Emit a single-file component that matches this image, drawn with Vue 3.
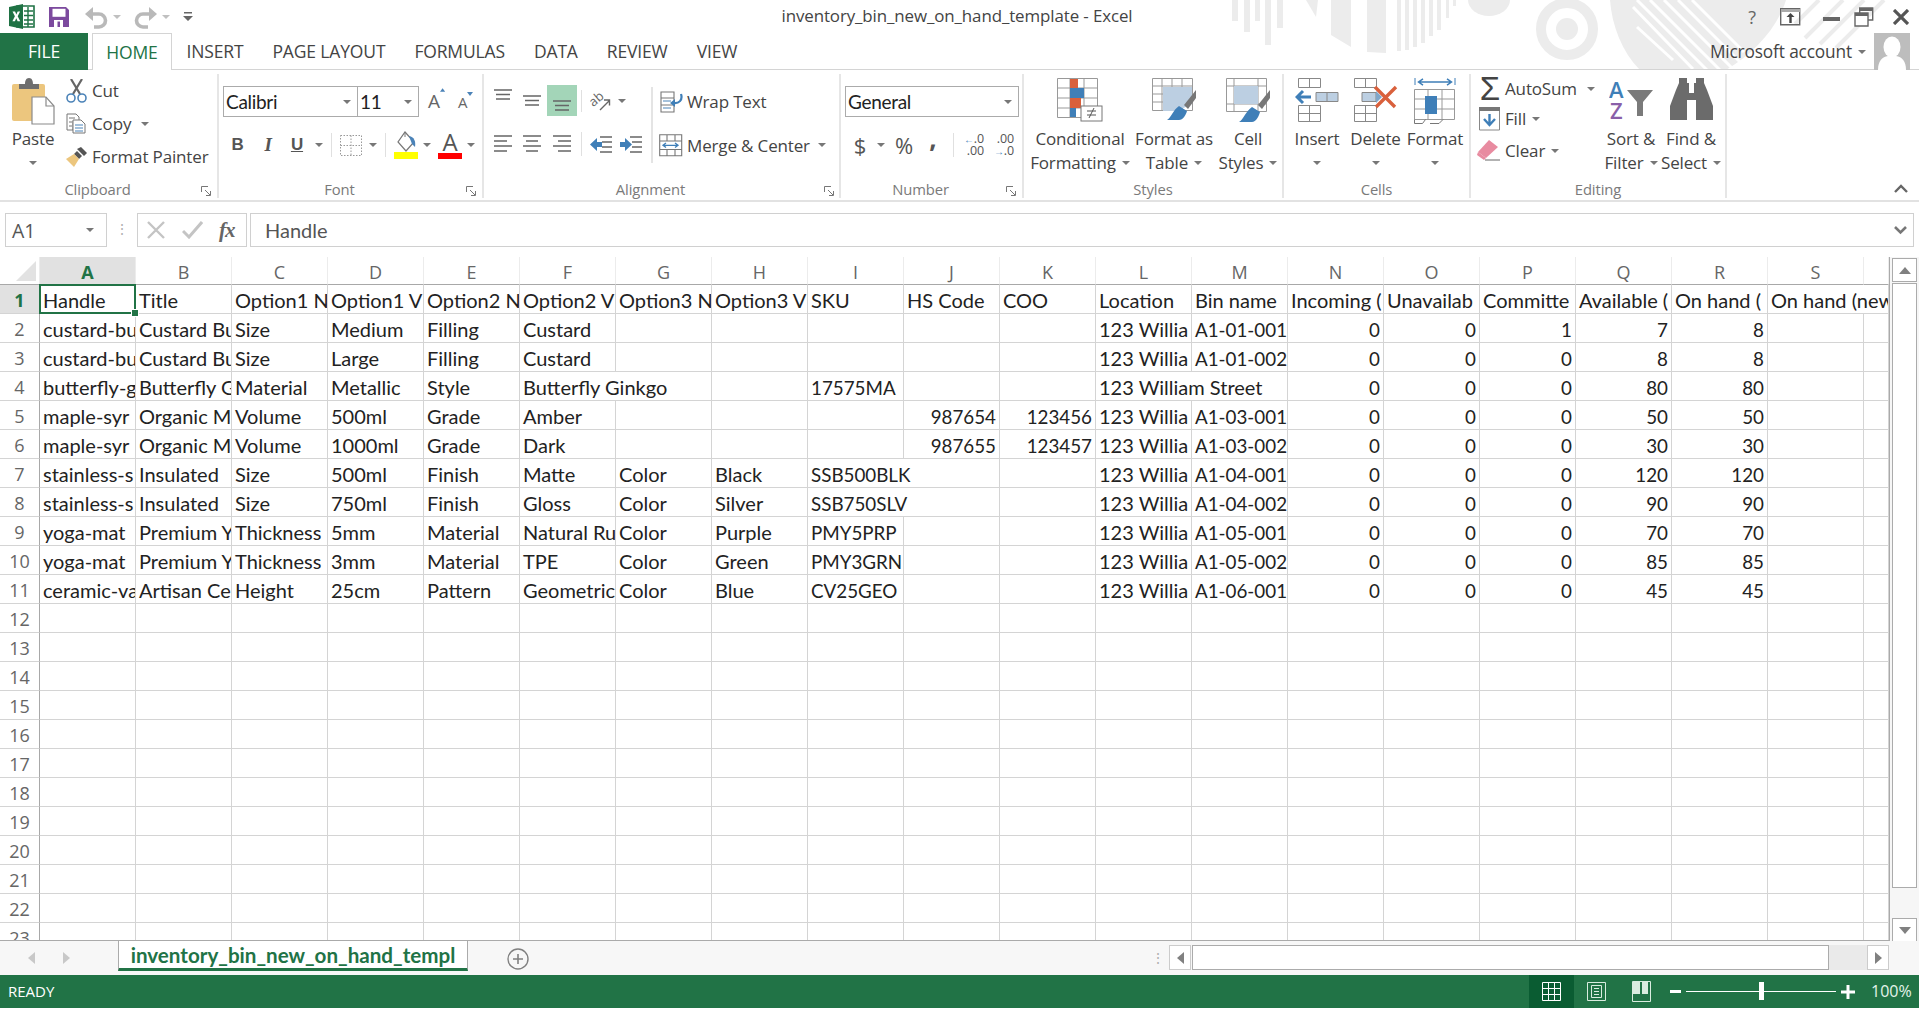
<script setup>
const tabs = ['INSERT', 'PAGE LAYOUT', 'FORMULAS', 'DATA', 'REVIEW', 'VIEW']
const cols = 'ABCDEFGHIJKLMNOPQRS'.split('').concat([''])
const loc = '123 Willia'
const codeCols = [8, 9, 10, 12]
const raw = [
  ['Handle','Title','Option1 N','Option1 V','Option2 N','Option2 V','Option3 N','Option3 V','SKU','HS Code','COO','Location','Bin name','Incoming (','Unavailab','Committe','Available (','On hand (','On hand (new',''],
  ['custard-bu','Custard Bu','Size','Medium','Filling','Custard','','','','','',loc,'A1-01-001',0,0,1,7,8,'',''],
  ['custard-bu','Custard Bu','Size','Large','Filling','Custard','','','','','',loc,'A1-01-002',0,0,0,8,8,'',''],
  ['butterfly-g','Butterfly G','Material','Metallic','Style','Butterfly Ginkgo','','','17575MA','','','123 William Street','',0,0,0,80,80,'',''],
  ['maple-syr','Organic M','Volume','500ml','Grade','Amber','','','',987654,123456,loc,'A1-03-001',0,0,0,50,50,'',''],
  ['maple-syr','Organic M','Volume','1000ml','Grade','Dark','','','',987655,123457,loc,'A1-03-002',0,0,0,30,30,'',''],
  ['stainless-s','Insulated','Size','500ml','Finish','Matte','Color','Black','SSB500BLK','','',loc,'A1-04-001',0,0,0,120,120,'',''],
  ['stainless-s','Insulated','Size','750ml','Finish','Gloss','Color','Silver','SSB750SLV','','',loc,'A1-04-002',0,0,0,90,90,'',''],
  ['yoga-mat','Premium Y','Thickness','5mm','Material','Natural Ru','Color','Purple','PMY5PRP','','',loc,'A1-05-001',0,0,0,70,70,'',''],
  ['yoga-mat','Premium Y','Thickness','3mm','Material','TPE','Color','Green','PMY3GRN','','',loc,'A1-05-002',0,0,0,85,85,'',''],
  ['ceramic-va','Artisan Ce','Height','25cm','Pattern','Geometric','Color','Blue','CV25GEO','','',loc,'A1-06-001',0,0,0,45,45,'',''],
]
const rows = []
for (let r = 0; r < 23; r++) {
  const src = raw[r] || new Array(20).fill('')
  const cells = []
  for (let c = 0; c < 20; c++) {
    const v = src[c]
    const s = String(v)
    const limit = c === 8 ? 8 : 11
    const spill = s.length > limit && c < 19 && src[c + 1] === ''
    const num = typeof v === 'number'
    cells.push({ key: c, text: s, num, code: r > 0 && (num || codeCols.includes(c)), span: spill ? 2 : 1 })
    if (spill) c++
  }
  rows.push({ n: r + 1, cells })
}
</script>

<template>
  <div class="app">
    <div class="chrome">
      <svg class="pattern" width="700" height="70" viewBox="1220 0 700 70">
        <g fill="#ececec">
          <rect x="1232" y="0" width="6" height="21"/><rect x="1244" y="0" width="6" height="32"/><rect x="1255" y="0" width="5" height="21"/><rect x="1265" y="0" width="6" height="45"/><rect x="1277" y="0" width="6" height="28"/>
          <path d="M1306 0h12l-2 17z"/><path d="M1331 0h20v47l-20-12z"/><path d="M1367 0h19v53l-19-1z"/>
          <rect x="1397" y="0" width="4" height="51"/><rect x="1405" y="0" width="4" height="50"/><rect x="1413" y="0" width="4" height="47"/><rect x="1421" y="0" width="4" height="43"/><rect x="1429" y="0" width="4" height="36"/><rect x="1437" y="0" width="4" height="30"/><rect x="1446" y="0" width="3" height="18"/><rect x="1453" y="0" width="3" height="6"/>
          <path d="M1468 0a21 16 0 0 0 42 0z"/>
          <circle cx="1567" cy="29" r="11"/>
          <path d="M1610 0c2 26 12 52 30 70h86c30-18 52-44 60-70z"/>
        </g>
        <circle cx="1567" cy="29" r="26" fill="none" stroke="#ececec" stroke-width="10"/>
        <g stroke="#fff" stroke-width="3" fill="none">
          <path d="M1633 7l60 62M1637 27l36 33M1637 0l70 70M1650 0l70 70M1664 0l70 70M1678 0l62 62M1692 0l52 52"/>
        </g>
        <g stroke="#ececec" stroke-width="4" fill="none">
          <path d="M1795 24l24-24M1805 38l38-38M1820 44l44-44M1836 48l48-48"/>
        </g>
      </svg>
      <div class="titlebar">
        <div class="qat">
          <svg class="i-excel" width="26" height="25" viewBox="0 0 26 25">
            <path d="M8 2h17v21H8z" fill="#fff" stroke="#1f7244" stroke-width="1.6"/>
            <path d="M15 7h9M15 11.5h9M15 16h9M15 20h9M19 3v20" stroke="#1f7244" stroke-width="1.4"/>
            <path d="M0 3l14-3v25L0 22z" fill="#1f7244"/>
            <path d="M3.5 7.5h2.6l1.2 3 1.4-3h2.4l-2.4 4.7 2.5 5h-2.6l-1.3-3-1.4 3H3.4l2.5-5z" fill="#fff"/>
          </svg>
          <svg class="i-save" width="20" height="20" viewBox="0 0 20 20">
            <path d="M0 0h17l3 3v17H0z" fill="#7c4a9e"/>
            <rect x="3.5" y="1.8" width="13" height="8" fill="#fff"/>
            <rect x="5" y="13" width="9" height="7" fill="#fff"/><rect x="8.5" y="14.5" width="2.5" height="5.5" fill="#7c4a9e"/>
          </svg>
          <svg class="i-undo" width="23" height="24" viewBox="0 0 23 24">
            <path d="M5 9h9a6.500 6.500 0 0 1 0 13H9" fill="none" stroke="#b9b9b9" stroke-width="3.6"/>
            <path d="M0 9l8-7v14z" fill="#b9b9b9"/>
          </svg>
          <i class="caret c-undo light"></i>
          <svg class="i-redo" width="23" height="24" viewBox="0 0 23 24">
            <path d="M18 9H9a6.500 6.500 0 0 0 0 13h5" fill="none" stroke="#b9b9b9" stroke-width="3.6"/>
            <path d="M23 9l-8-7v14z" fill="#b9b9b9"/>
          </svg>
          <i class="caret c-redo light"></i>
          <svg class="i-cust" width="10" height="9" viewBox="0 0 10 9"><path d="M1 0h8v1.500H1zM0 4h10L5 9z" fill="#666"/></svg>
        </div>
        <div class="title">inventory_bin_new_on_hand_template - Excel</div>
        <div class="win">
          <span class="help">?</span>
          <svg class="w-disp" width="21" height="18" viewBox="0 0 21 18"><path d="M.7.700h19v16H.7z" fill="none" stroke="#666" stroke-width="1.400"/><path d="M1 1h19v3H1z" fill="#aaa"/><path d="M10.500 5l-4 4h2.800v6h2.400V9h2.800z" fill="#444"/></svg>
          <svg class="w-min" width="18" height="18" viewBox="0 0 18 18"><rect x="0" y="9" width="17" height="4" fill="#666"/></svg>
          <svg width="20" height="20" viewBox="0 0 20 20"><path d="M5.700 1h13v12h-13z" fill="none" stroke="#666" stroke-width="1.400"/><path d="M5 1h14v3H5z" fill="#666"/><path d="M1 6h13v13H1z" fill="#fff" stroke="#666" stroke-width="1.400"/><path d="M1 6h13v3H1z" fill="#666"/></svg>
          <svg width="16" height="16" viewBox="0 0 16 16"><path d="M1 1l14 14M15 1L1 15" stroke="#555" stroke-width="3.200"/></svg>
        </div>
      </div>
      <div class="tabstrip">
        <div class="tab file">FILE</div>
        <div class="tab home">HOME</div>
        <div v-for="t in tabs" :key="t" class="tab">{{ t }}</div>
        <div class="account">
          <span>Microsoft account</span><i class="caret c-acct"></i>
          <svg class="avatar" width="36" height="37" viewBox="0 0 36 37">
            <rect width="36" height="37" fill="#bdbdbd"/>
            <ellipse cx="18" cy="14" rx="8.500" ry="10.500" fill="#fff"/>
            <path d="M4 37c0-9 4-13 10-14h8c6 1 10 5 10 14z" fill="#fff"/>
          </svg>
        </div>
      </div>
    </div>

    <div class="ribbon">
      <section class="group g-clip">
        <div class="body flexrow">
          <div class="big w-paste">
            <div class="big-icon">
              <svg width="44" height="47" viewBox="0 0 44 47">
                <rect x="1" y="6" width="33" height="37" rx="2" fill="#ecc67e"/>
                <path d="M8 6h6c0-3 1-6 4-6s4 3 4 6h6v5H8z" fill="#6e6e6e"/>
                <path d="M21 19h14l8 9v18H21z" fill="#fff" stroke="#8a8a8a" stroke-width="1.200"/>
                <path d="M35 19v9h8" fill="none" stroke="#8a8a8a" stroke-width="1.200"/>
              </svg>
            </div>
            <div class="big-text">Paste</div>
            <div class="big-text"><i class="caret"></i></div>
          </div>
          <div class="smalls">
            <div class="srow">
              <span class="sico"><svg width="21" height="24" viewBox="0 0 21 24">
                <path d="M5 0l9 15M16 0L7 15" stroke="#666" stroke-width="2.200" fill="none"/>
                <circle cx="5" cy="19" r="4" fill="none" stroke="#4b83b8" stroke-width="1.600"/><circle cx="16" cy="19" r="4" fill="none" stroke="#4b83b8" stroke-width="1.600"/>
              </svg></span>Cut
            </div>
            <div class="srow">
              <span class="sico"><svg width="20" height="21" viewBox="0 0 20 21">
                <path d="M1 1h9l3 3v4H7v9H1z" fill="#fff" stroke="#777"/><path d="M7 7h8l4 4v9H7z" fill="#fff" stroke="#777"/>
                <path d="M3 5h6M3 9h3M3 13h3" stroke="#777"/><path d="M9 12h8M9 15h8M9 18h8" stroke="#4b83b8"/>
              </svg></span>Copy<i class="caret c-copy"></i>
            </div>
            <div class="srow">
              <span class="sico"><svg width="21" height="20" viewBox="0 0 21 20">
                <path d="M11 2l4-2 6 6-3 3-3-3z" fill="#555"/><path d="M11 4l5 5-3 3-5-5z" fill="#555"/>
                <path d="M8 7l5 5-5 8-8-8z" fill="#ecc67e"/>
              </svg></span>Format Painter
            </div>
          </div>
        </div>
        <div class="glabel shift">Clipboard</div>
        <svg class="launch" width="10" height="10" viewBox="0 0 10 10"><path d="M.5 6V.5H7M4 4l5 5M9.500 5v4.500H5" fill="none" stroke="#777"/></svg>
      </section>

      <section class="group g-font">
        <div class="body">
          <div class="boxes">
            <div class="combo c-fontname"><span>Calibri</span><i class="caret"></i></div>
            <div class="combo c-fontsize"><span>11</span><i class="caret"></i></div>
            <span class="grow a1">A<svg width="6" height="4" viewBox="0 0 6 4"><path d="M0 4l3-4 3 4z" fill="#4b83b8"/></svg></span>
            <span class="grow a2">A<svg width="6" height="4" viewBox="0 0 6 4"><path d="M0 0l3 4 3-4z" fill="#4b83b8"/></svg></span>
          </div>
          <div class="row2 font2">
            <b class="fmt">B</b><i class="fmt it">I</i><u class="fmt und">U</u><i class="caret"></i><i class="vsep"></i>
            <svg width="22" height="21" viewBox="0 0 22 21"><path d="M.5.500h21v20H.5zM11 .5v20M.5 10.500h21" fill="none" stroke="#999" stroke-dasharray="1.500 1.500"/></svg>
            <i class="caret"></i><i class="vsep"></i>
            <svg width="24" height="28" viewBox="0 0 24 28">
              <path d="M11 1l9 10-8 9-8-9z" fill="#fff" stroke="#777" stroke-width="1.200"/><path d="M11 1V6" stroke="#777"/><path d="M15 5c5 1 7 5 6 11l-3-3z" fill="#4b83b8"/>
              <rect x="0" y="21" width="24" height="7" fill="#ffff00"/>
            </svg>
            <i class="caret"></i>
            <span class="fcolor">A</span>
            <i class="caret"></i>
          </div>
        </div>
        <div class="glabel shift">Font</div>
        <svg class="launch" width="10" height="10" viewBox="0 0 10 10"><path d="M.5 6V.5H7M4 4l5 5M9.500 5v4.500H5" fill="none" stroke="#777"/></svg>
      </section>

      <section class="group g-align">
        <div class="body flexrow">
          <div class="al-left">
            <div class="al1">
              <svg width="18" height="11" viewBox="0 0 18 11"><path d="M0 1h18M2 5.500h14M2 10h14" stroke="#666" stroke-width="1.300"/></svg>
              <svg width="18" height="11" class="mid" viewBox="0 0 18 11"><path d="M0 1h18M2 5.500h14M2 10h14" stroke="#666" stroke-width="1.300"/></svg>
              <span class="al-on"><svg width="18" height="11" viewBox="0 0 18 11"><path d="M0 1h18M2 5.500h14M2 10h14" stroke="#666" stroke-width="1.300"/></svg></span>
              <i class="vsep"></i>
              <svg width="22" height="20" viewBox="0 0 22 20">
                <text x="0" y="13" class="ab" transform="rotate(-40 6 10)">ab</text>
                <path d="M10 19l9-9M14 9h5.500v5.500" fill="none" stroke="#666" stroke-width="1.400"/>
              </svg>
              <i class="caret"></i>
            </div>
            <div class="al2">
              <svg width="18" height="19" viewBox="0 0 18 19"><path d="M0 1h18M0 6h13M0 11h18M0 16h13" stroke="#666" stroke-width="1.300"/></svg>
              <svg width="18" height="19" viewBox="0 0 18 19"><path d="M0 1h18M3 6h12M0 11h18M3 16h12" stroke="#666" stroke-width="1.300"/></svg>
              <svg width="18" height="19" viewBox="0 0 18 19"><path d="M0 1h18M5 6h13M0 11h18M5 16h13" stroke="#666" stroke-width="1.300"/></svg>
              <i class="vsep"></i>
              <svg width="22" height="17" viewBox="0 0 22 17"><path d="M10 1h12M12 6h10M12 11h10M10 16h12" stroke="#666" stroke-width="1.300"/><path d="M0 8.500L7 2v4h5v5H7v4z" fill="#3f7fb8"/></svg>
              <svg width="22" height="17" viewBox="0 0 22 17"><path d="M10 1h12M12 6h10M12 11h10M10 16h12" stroke="#666" stroke-width="1.300"/><path d="M12 8.500L5 2v4H0v5h5v4z" fill="#3f7fb8"/></svg>
            </div>
          </div>
          <i class="vsep tall"></i>
          <div class="al-right">
            <div class="arow">
              <span class="aico"><svg width="24" height="22" viewBox="0 0 24 22">
                <path d="M2 1h13v6h-13zM2 7h13v7H2zM2 14h13v7H2z" fill="none" stroke="#777" stroke-width="1.100"/>
                <path d="M4 10h8M4 17h8" stroke="#4b83b8" stroke-width="1.200"/>
                <path d="M22 3c2 6-2 10-8 9" fill="none" stroke="#3f7fb8" stroke-width="2.200"/><path d="M11 12l5-4v8z" fill="#3f7fb8"/>
              </svg></span>Wrap Text
            </div>
            <div class="arow">
              <span class="aico"><svg width="24" height="23" viewBox="0 0 24 23">
                <path d="M.7.700h22v21H.7zM.7 7h22M.7 15.500h22M8 .7V7M16 .7V7M8 15.500v6M16 15.500v6" fill="none" stroke="#777" stroke-width="1.100"/>
                <path d="M4 11.300h15M7 9L4 11.300 7 13.500M16 9l3 2.300L16 13.500" fill="none" stroke="#3f7fb8" stroke-width="1.300"/>
              </svg></span>Merge &amp; Center<i class="caret c-merge"></i>
            </div>
          </div>
        </div>
        <div class="glabel shift">Alignment</div>
        <svg class="launch l6" width="10" height="10" viewBox="0 0 10 10"><path d="M.5 6V.5H7M4 4l5 5M9.500 5v4.500H5" fill="none" stroke="#777"/></svg>
      </section>

      <section class="group g-num">
        <div class="body">
          <div class="boxes"><div class="combo c-general"><span>General</span><i class="caret"></i></div></div>
          <div class="row2 num2">
            <span class="cur">$</span><i class="caret"></i><span class="cur">%</span><span class="cur comma">,</span><i class="vsep"></i>
            <span class="dec"><span><b class="ar">←</b>.0</span><span>.00</span></span>
            <span class="dec"><span>.00</span><span><b class="ar">→</b>.0</span></span>
          </div>
        </div>
        <div class="glabel shift">Number</div>
        <svg class="launch" width="10" height="10" viewBox="0 0 10 10"><path d="M.5 6V.5H7M4 4l5 5M9.500 5v4.500H5" fill="none" stroke="#777"/></svg>
      </section>

      <section class="group g-styles">
        <div class="body flexrow">
          <div class="big w-cond">
            <div class="big-icon"><svg width="46" height="44" viewBox="0 0 46 44">
              <path d="M.5.500h40v39H.5zM.5 10h40M.5 20h40M.5 30h40M13 .5v39M27 .5v39" fill="none" stroke="#999"/>
              <rect x="13" y="1" width="8" height="9" fill="#d9603c"/><rect x="13" y="10" width="14" height="10" fill="#3f7fb8"/><rect x="13" y="20" width="11" height="10" fill="#d9603c"/><rect x="13" y="30" width="6" height="9" fill="#3f7fb8"/>
              <rect x="24" y="28" width="21" height="15" fill="#fff" stroke="#777"/><path d="M30 33h9M30 37h9M37 30l-5 10" stroke="#555"/>
            </svg></div>
            <div class="big-text">Conditional</div>
            <div class="big-text">Formatting<i class="caret ml"></i></div>
          </div>
          <div class="big w-ftable">
            <div class="big-icon"><svg width="44" height="42" viewBox="0 0 44 42">
              <path d="M.5.500h40v32H.5zM.5 8h40M.5 16h40M.5 24h40M10 .5v32M20 .5v32M30 .5v32" fill="none" stroke="#999"/>
              <path d="M11 9h29v17l-15 7H11z" fill="#bccfe2"/>
              <path d="M44 12l-12 15 4 4 8-11z" fill="#777"/>
              <path d="M15 42c4-2 6-10 12-14l8 5c-1 4-4 9-8 9z" fill="#3f7fb8"/>
            </svg></div>
            <div class="big-text">Format as</div>
            <div class="big-text">Table<i class="caret ml"></i></div>
          </div>
          <div class="big w-cell">
            <div class="big-icon"><svg width="44" height="44" viewBox="0 0 44 44">
              <path d="M.5.500h40v33H.5zM.5 8h40M8 .5v33M32 .5v33M.5 26h40" fill="none" stroke="#999"/>
              <path d="M8 8h24v18H8z" fill="#bccfe2"/>
              <path d="M44 12l-12 15 4 4 8-11z" fill="#777"/>
              <path d="M13 44c4-2 7-11 13-15l8 5c-1 4-4 10-8 10z" fill="#3f7fb8"/>
            </svg></div>
            <div class="big-text">Cell</div>
            <div class="big-text">Styles<i class="caret ml"></i></div>
          </div>
        </div>
        <div class="glabel">Styles</div>
      </section>

      <section class="group g-cells">
        <div class="body flexrow">
          <div class="big w-ins">
            <div class="big-icon"><svg width="44" height="44" viewBox="0 0 44 44">
              <path d="M3.500.5h22v9h-22zM14.500.5v9M3.500 27.500h22v16h-22zM14.500 27.500v16M3.500 35.500h22" fill="none" stroke="#888"/>
              <path d="M21 14.500h22v9H21z" fill="#bccfe2" stroke="#888"/><path d="M32 14.500v9" stroke="#888"/>
              <path d="M2 19h14M8 13l-6 6 6 6" fill="none" stroke="#3f7fb8" stroke-width="3"/>
            </svg></div>
            <div class="big-text">Insert</div>
            <div class="big-text"><i class="caret"></i></div>
          </div>
          <div class="big w-del">
            <div class="big-icon"><svg width="44" height="44" viewBox="0 0 44 44">
              <path d="M.5.500h22v9H.5zM11.500.5v9M.5 27.500h22v16H.5zM11.500 27.500v16M.5 35.500h22" fill="none" stroke="#888"/>
              <path d="M8 14.500h14v9H8z" fill="#bccfe2" stroke="#888"/><path d="M22 13l6 6-6 6z" fill="#7fa6c9"/>
              <path d="M21 9l20 20M42 9L22 29" stroke="#d9603c" stroke-width="3.400"/>
            </svg></div>
            <div class="big-text">Delete</div>
            <div class="big-text"><i class="caret"></i></div>
          </div>
          <div class="big w-fmt">
            <div class="big-icon"><svg width="42" height="46" viewBox="0 0 42 46">
              <path d="M1 0v7M41 0v7" stroke="#3f7fb8"/><path d="M5 4h32M9 0.800L4.500 4 9 7.200M33 .8L37.500 4 33 7.200" fill="none" stroke="#3f7fb8" stroke-width="1.500"/>
              <path d="M.5 11.500h40v30H.5zM14 11.500v30M28 11.500v30M.5 21h40M.5 31h40" fill="none" stroke="#999"/>
              <rect x="11" y="18" width="12" height="18" fill="#3f7fb8"/>
              <path d="M.5 41.500v4h8l3-4M16 45.500h9l4-4" fill="none" stroke="#777"/>
            </svg></div>
            <div class="big-text">Format</div>
            <div class="big-text"><i class="caret"></i></div>
          </div>
        </div>
        <div class="glabel">Cells</div>
      </section>

      <section class="group g-edit">
        <div class="body flexrow">
          <div class="edits">
            <div class="erow"><span class="eico"><span class="sigma">Σ</span></span>AutoSum<i class="caret c-auto"></i></div>
            <div class="erow"><span class="eico"><svg width="21" height="24" viewBox="0 0 21 24">
              <path d="M.5 1h20v22H.5z" fill="#fff" stroke="#888"/><rect x="0" y="0" width="21" height="4" fill="#777"/>
              <path d="M10.500 7v10M5 12l5.500 6 5.500-6" fill="none" stroke="#3f7fb8" stroke-width="2.400"/>
            </svg></span>Fill<i class="caret c-mini"></i></div>
            <div class="erow"><span class="eico"><svg width="23" height="21" viewBox="0 0 23 21">
              <path d="M12 0l9 7L9 18l-8-6z" fill="#e88ba0"/><path d="M1 12l8 6-2 2-7-5z" fill="#e88ba0"/><path d="M8 20h15" stroke="#666"/>
            </svg></span>Clear<i class="caret c-mini"></i></div>
          </div>
          <div class="big w-sort">
            <div class="big-icon"><svg width="44" height="42" viewBox="0 0 44 42">
              <text x="0" y="20" class="az az-a">A</text><text x="1" y="41" class="az az-z">Z</text>
              <path d="M18 12h26l-10 12v14h-6V24z" fill="#7a7a7a"/>
            </svg></div>
            <div class="big-text">Sort &amp;</div>
            <div class="big-text">Filter<i class="caret ml"></i></div>
          </div>
          <div class="big w-find">
            <div class="big-icon"><svg width="43" height="42" viewBox="0 0 43 42">
              <path d="M9 0h8v5h2v10h5V5h2V0h8v5l3 7 6 16v14H26V22h-9v20H0V28l6-16 3-7z" fill="#6b6b6b"/>
            </svg></div>
            <div class="big-text">Find &amp;</div>
            <div class="big-text">Select<i class="caret ml"></i></div>
          </div>
        </div>
        <div class="glabel">Editing</div>
      </section>

      <svg class="collapse" width="14" height="9" viewBox="0 0 14 9"><path d="M1 8l6-6 6 6" fill="none" stroke="#666" stroke-width="2.400"/></svg>
    </div>

    <div class="fbar">
      <div class="namebox"><span>A1</span><i class="caret"></i></div>
      <span class="fdots">⋮</span>
      <div class="fbtns">
        <svg width="18" height="18" viewBox="0 0 18 18"><path d="M1 1l16 16M17 1L1 17" stroke="#c4c4c4" stroke-width="2.400"/></svg>
        <svg width="21" height="18" viewBox="0 0 21 18"><path d="M1 10l6 6L20 1" fill="none" stroke="#c4c4c4" stroke-width="3"/></svg>
        <span class="fx">fx</span>
      </div>
      <div class="finput"><span>Handle</span><svg width="13" height="9" viewBox="0 0 13 9"><path d="M1 1l5.500 5.500L12 1" fill="none" stroke="#777" stroke-width="2.600"/></svg></div>
    </div>

    <div class="sheetwrap">
      <div class="grid">
        <table>
          <colgroup><col class="col-h"/><col v-for="(c, i) in cols" :key="i" :class="c ? 'col-n' : 'col-t'"/></colgroup>
          <thead>
            <tr>
              <th class="corner"><span></span></th>
              <th v-for="(c, i) in cols" :key="i" :class="{ act: c === 'A' }">{{ c }}</th>
            </tr>
          </thead>
          <tbody>
            <tr v-for="r in rows" :key="r.n">
              <th :class="['rn', { act: r.n === 1 }]">{{ r.n }}</th>
              <td v-for="c in r.cells" :key="c.key" :colspan="c.span" :class="{ num: c.num, code: c.code, sel: r.n === 1 && c.key === 0 }"><div class="cv">{{ c.text }}</div></td>
            </tr>
          </tbody>
        </table>
      </div>
      <div class="vscroll">
        <div class="sbtn"><i class="tri-up"></i></div>
        <div class="vthumb"></div>
        <div class="sbtn"><i class="tri-down"></i></div>
      </div>
    </div>

    <div class="sheetbar">
      <div class="nav"><i class="tri-left light"></i><i class="tri-right light"></i></div>
      <div class="sheettab">inventory_bin_new_on_hand_templ</div>
      <svg class="addsheet" width="22" height="22" viewBox="0 0 22 22"><circle cx="11" cy="11" r="10" fill="none" stroke="#808080" stroke-width="1.400"/><path d="M6 11h10M11 6v10" stroke="#808080" stroke-width="1.600"/></svg>
      <span class="hdots">⋮</span>
      <div class="hscroll">
        <div class="hbtn"><i class="tri-left"></i></div>
        <div class="hthumb"></div>
        <div class="htrack"></div>
        <div class="hbtn"><i class="tri-right"></i></div>
      </div>
    </div>

    <div class="status">
      <span class="ready">READY</span>
      <div class="views">
        <span class="v on"><svg width="19" height="19" viewBox="0 0 19 19"><path d="M.5.500h18v18H.5zM6.500.5v18M12.500.5v18M.5 6.500h18M.5 12.500h18" fill="none" stroke="#fff"/></svg></span>
        <span class="v"><svg width="19" height="19" viewBox="0 0 19 19"><path d="M.5.500h18v18H.5z" fill="none" stroke="#d9ecdf"/><path d="M4.500 3.500h10v12h-10zM7 6.500h5M7 9.500h5M7 12.500h5" fill="none" stroke="#d9ecdf"/></svg></span>
        <span class="v"><svg width="19" height="21" viewBox="0 0 19 21"><path d="M.5.500h18v20H.5z" fill="none" stroke="#d9ecdf"/><path d="M1 1h7v12H1zM10 1h6v12h-6z" fill="#d9ecdf"/></svg></span>
      </div>
      <div class="zoombar">
        <i class="zminus"></i>
        <div class="zline"><i class="zthumb"></i></div>
        <svg width="14" height="14" viewBox="0 0 14 14"><path d="M0 7h14M7 0v14" stroke="#fff" stroke-width="3"/></svg>
      </div>
      <span class="pct">100%</span>
    </div>
  </div>
</template>

<style>
html, body { margin: 0; padding: 0; background: #fff; overflow: hidden; }
</style>

<style scoped>
.app { width: 1919px; height: 1009px; display: flex; flex-direction: column; overflow: hidden; background: #fff; font-family: "Open Sans", "Noto Sans", sans-serif; font-size: 16px; color: #444; }
.chrome { position: relative; height: 70px; flex: none; }
.pattern { position: absolute; left: 1220px; top: 0; }
.titlebar { position: relative; height: 33px; display: flex; align-items: center; }
.qat { width: 620px; display: flex; align-items: center; padding-left: 9px; box-sizing: border-box; height: 33px; }
.i-save { margin-left: 14px; }
.i-undo { margin-left: 16px; }
.c-undo { margin-left: 5px; }
.i-redo { margin-left: 13px; }
.c-redo { margin-left: 5px; }
.i-cust { margin-left: 13px; }
.title { width: 686px; text-align: center; font-size: 16.900px; letter-spacing: -.1px; color: #444; margin-left: -147px; padding-left: 141px; box-sizing: content-box; margin-bottom: 2px; }
.win { margin-left: auto; display: flex; align-items: center; gap: 19px; padding-right: 10px; }
.help { font-size: 18px; color: #666; margin-right: 2px; }
.w-disp { margin-left: 3px; margin-right: -3px; }
.w-min { margin-left: 6px; margin-right: -6px; }
.tabstrip { position: relative; height: 37px; display: flex; align-items: stretch; border-bottom: 1px solid #d4d4d4; box-sizing: border-box; }
.tab { padding: 0 14.500px; line-height: 36px; font-size: 17.500px; color: #444; letter-spacing: -.15px; }
.tab.file { width: 88px; padding: 0; box-sizing: border-box; text-align: center; background: #217346; color: #fff; margin-right: 4px; height: 37px; }
.tab.home { width: 80px; padding: 0; box-sizing: border-box; text-align: center; color: #217346; background: #fff; border: 1px solid #d4d4d4; border-bottom: none; height: 37px; margin-right: 0; }
.account { margin-left: auto; display: flex; align-items: center; font-size: 17.300px; letter-spacing: -.15px; padding-right: 9px; height: 37px; }
.c-acct { margin-left: 6px; margin-right: 8px; }
.avatar { display: block; }

.caret { display: inline-block; width: 0; height: 0; border-left: 4px solid transparent; border-right: 4px solid transparent; border-top: 4.500px solid #777; flex: none; }
.caret.light { border-top-color: #c0c0c0; }
.caret.ml { margin-left: 6px; vertical-align: middle; }
.vsep { display: block; width: 1px; height: 24px; background: #e0e0e0; justify-self: center; }
.vsep.tall { height: 76px; width: 2px; margin-top: 13px; margin-left: 2px; margin-right: 6px; background: #e4e4e4; }

.ribbon { position: relative; height: 132px; flex: none; display: flex; padding-top: 4px; box-sizing: border-box; border-bottom: 2px solid #e2e2e2; font-size: 17px; letter-spacing: -.15px; }
.group { position: relative; height: 124px; display: flex; flex-direction: column; border-right: 2px solid #e6e6e6; box-sizing: border-box; flex: none; }
.body { flex: 1; min-height: 0; }
.flexrow { display: flex; }
.glabel { height: 14px; line-height: 14px; text-align: center; font-size: 14.800px; color: #7a7a7a; margin-bottom: 2px; letter-spacing: -.1px; }
.glabel.shift { padding-right: 22px; }
.launch { position: absolute; right: 6px; bottom: 2px; }
.launch.l6 { right: 5px; }
.g-clip { width: 219px; }
.g-font { width: 265px; }
.g-align { width: 357px; }
.g-num { width: 183px; }
.g-styles { width: 260px; }
.g-cells { width: 187px; padding-left: 0; }
.g-edit { width: 256px; }

.big { display: flex; flex-direction: column; align-items: center; flex: none; }
.big-icon { height: 53px; display: flex; align-items: flex-start; padding-top: 4px; box-sizing: border-box; }
.big-text { height: 24px; line-height: 24px; white-space: nowrap; display: flex; align-items: center; justify-content: center; }
.w-paste { width: 66px; }
.smalls { display: grid; grid-auto-rows: 33px; }
.srow { display: flex; align-items: center; white-space: nowrap; }
.sico { width: 26px; display: flex; justify-content: flex-start; }
.c-copy { margin-left: 10px; }
.w-cond { width: 100px; margin-left: 6px; }
.w-ftable { width: 88px; }
.w-cell { width: 60px; }
.w-ins { width: 52px; margin-left: 7px; }
.w-del { width: 65px; }
.w-fmt { width: 54px; }
.w-sort { width: 58px; }
.w-find { width: 62px; }

.boxes { display: flex; align-items: center; padding: 12px 0 0 4px; height: 31px; }
.combo { height: 31px; box-sizing: border-box; border: 1px solid #ababab; display: flex; align-items: center; justify-content: space-between; padding: 0 6px 0 2px; background: #fff; font-family: Lato, "Open Sans", sans-serif; font-size: 19px; color: #222; letter-spacing: -.3px; }
.c-fontname { width: 135px; }
.c-fontsize { width: 62px; margin-left: -1px; }
.c-general { width: 174px; }
.grow { width: 17px; font-size: 17px; color: #666; display: inline-flex; align-items: flex-start; position: relative; line-height: 1.3; }
.grow.a1 { margin-left: 9px; font-size: 19px; }
.grow.a2 { margin-left: 13px; font-size: 15px; padding-top: 3px; }
.grow svg { margin-top: -1px; }
.row2 { display: grid; align-items: center; justify-items: center; height: 32px; margin: 12px 0 0 4px; }
.font2 { grid-template-columns: 29px 32px 26px 17px 8px 32px 12px 12px 30px 12px 34px 8px; }
.num2 { grid-template-columns: 30px 12px 34px 24px 16px 26px 34px; }
.fmt { font-size: 17px; font-family: "Liberation Sans", sans-serif; color: #555; font-style: normal; }
.fmt.it { font-style: italic; font-family: "Liberation Serif", serif; font-weight: 700; font-size: 19px; }
.fmt.und { font-weight: 700; text-decoration: underline; }
.fcolor { font-size: 24px; line-height: 22px; color: #555; width: 24px; text-align: center; border-bottom: 6px solid #f00; font-weight: 500; }
.al-left { width: 165px; padding-left: 4px; box-sizing: border-box; }
.al1 { display: grid; grid-template-columns: 29px 30px 30px 8px 32px 10px; height: 31px; margin-top: 11px; justify-items: center; align-items: center; }
.al1 > svg:first-child { margin-bottom: 13px; }
.al1 .vsep { height: 22px; }
.al-on { width: 30px; height: 31px; background: #a3d5b8; display: flex; align-items: flex-end; justify-content: center; padding-bottom: 5px; box-sizing: border-box; }
.ab { font-size: 13px; fill: #666; font-family: "Open Sans", sans-serif; }
.al2 { display: grid; grid-template-columns: 29px 30px 30px 8px 32px 28px; height: 32px; margin-top: 12px; justify-items: center; align-items: center; }
.al-right { padding-top: 8px; display: grid; grid-template-rows: 39px 48px; }
.arow { display: flex; align-items: center; white-space: nowrap; }
.aico { width: 28px; display: flex; align-items: center; }
.c-merge { margin-left: 8px; }
.cur { font-size: 22px; color: #555; font-family: "Open Sans", sans-serif; }
.cur.comma { font-weight: 700; font-size: 26px; margin-top: -14px; }
.dec { display: flex; flex-direction: column; font-size: 12.500px; line-height: 12px; color: #555; font-family: "Open Sans", sans-serif; align-items: flex-end; }
.ar { color: #3f7fb8; font-size: 10px; }
.edits { width: 131px; display: grid; grid-template-rows: 29px 31px 33px; }
.erow { display: flex; align-items: center; white-space: nowrap; }
.eico { width: 34px; display: flex; justify-content: flex-end; padding-right: 5px; box-sizing: border-box; }
.sigma { font-size: 33px; line-height: 24px; color: #444; font-family: "Liberation Sans", sans-serif; }
.c-auto { margin-left: 10px; }
.c-mini { margin-left: 6px; }
.az { font-size: 22px; font-family: "Open Sans", sans-serif; font-weight: 600; }
.az-a { fill: #3f7fb8; }
.az-z { fill: #8a5fa8; }
.collapse { position: absolute; right: 11px; bottom: 7px; }

.fbar { height: 34px; margin-top: 11px; display: flex; flex: none; padding: 0 5px; align-items: stretch; }
.namebox { width: 102px; box-sizing: border-box; border: 1px solid #d0d0d0; display: flex; align-items: center; justify-content: space-between; padding: 0 12px 0 6px; font-size: 19.500px; color: #555; }
.fdots { width: 30px; text-align: center; color: #b0b0b0; line-height: 32px; font-size: 14px; }
.fbtns { width: 110px; box-sizing: border-box; border: 1px solid #d0d0d0; display: flex; align-items: center; padding-left: 9px; gap: 17px; }
.fx { font-family: "Liberation Serif", serif; font-style: italic; font-size: 21px; color: #666; font-weight: 700; letter-spacing: -1px; margin-left: -1px; }
.finput { margin-left: 3px; width: 1664px; box-sizing: border-box; border: 1px solid #d0d0d0; display: flex; align-items: center; justify-content: space-between; padding: 0 6px 0 14px; font-family: Lato, "Open Sans", sans-serif; font-size: 20px; color: #555; }

.sheetwrap { margin-top: 10px; height: 684px; flex: none; display: flex; }
.grid { width: 1890px; height: 684px; box-sizing: border-box; border-right: 1px solid #aaa; border-bottom: 1px solid #aaa; overflow: hidden; flex: none; }
table { table-layout: fixed; width: 1889px; border-collapse: separate; border-spacing: 0; font-family: Lato, "Carlito", sans-serif; font-size: 20px; color: #222; }
td.code { font-size: 18.800px; }
td.code .cv { line-height: 31px; }
.col-h { width: 40px; }
.col-n { width: 96px; }
.col-t { width: 25px; }
thead th { height: 28px; box-sizing: border-box; padding: 3px 0 0; font-family: "Open Sans", sans-serif; font-weight: 400; font-size: 18px; color: #666; border-right: 1px solid #ececec; border-bottom: 1px solid #a8a8a8; text-align: center; }
thead th.act { background: #e1e1e1; color: #217346; font-weight: 700; }
thead th.corner { position: relative; border-right: 1px solid #ececec; }
.corner span { position: absolute; right: 3px; bottom: 3px; width: 0; height: 0; border-left: 20px solid transparent; border-bottom: 20px solid #e2e2e2; }
tbody th.rn { height: 29px; box-sizing: border-box; padding: 2px 0 0; font-family: "Open Sans", sans-serif; font-weight: 400; font-size: 18px; color: #666; border-right: 1px solid #a8a8a8; border-bottom: 1px solid #d4d4d4; text-align: center; }
tbody th.rn.act { background: #e1e1e1; color: #217346; font-weight: 700; }
td { height: 29px; box-sizing: border-box; padding: 0; border-right: 1px solid #d4d4d4; border-bottom: 1px solid #d4d4d4; }
.cv { height: 28px; line-height: 30px; padding: 0 3px; overflow: hidden; white-space: nowrap; }
td.num { text-align: right; }
td.sel { position: relative; }
td.sel::before { content: ""; position: absolute; left: -1px; top: -1px; right: -1px; bottom: -1px; border: 2px solid #217346; }
td.sel::after { content: ""; position: absolute; right: -4px; bottom: -4px; width: 6px; height: 6px; background: #217346; border: 1px solid #fff; }
.vscroll { width: 29px; box-sizing: border-box; padding: 1px 2px 0 2px; background: #f6f6f6; display: flex; flex-direction: column; height: 685px; }
.sbtn { height: 24px; flex: none; box-sizing: border-box; background: #fff; border: 1px solid #ababab; display: flex; align-items: center; justify-content: center; }
.vthumb { height: 605px; margin-top: 1px; margin-bottom: 30px; box-sizing: border-box; background: #fff; border: 1px solid #ababab; flex: none; }
.tri-up { border-left: 6px solid transparent; border-right: 6px solid transparent; border-bottom: 7px solid #808080; }
.tri-down { border-left: 6px solid transparent; border-right: 6px solid transparent; border-top: 7px solid #808080; }
.tri-left { border-top: 6px solid transparent; border-bottom: 6px solid transparent; border-right: 7px solid #808080; }
.tri-right { border-top: 6px solid transparent; border-bottom: 6px solid transparent; border-left: 7px solid #808080; }
.tri-left.light { border-right-color: #c8c8c8; }
.tri-right.light { border-left-color: #c8c8c8; }

.sheetbar { height: 34px; flex: none; display: flex; align-items: flex-start; background: #f7f7f7; position: relative; }
.nav { width: 118px; box-sizing: border-box; padding: 11px 0 0 28px; display: flex; gap: 28px; }
.sheettab { width: 350px; height: 30px; box-sizing: border-box; background: #fff; border: 1px solid #ababab; border-top: none; border-bottom: 3px solid #217346; text-align: center; font-weight: 700; font-family: Lato, "Open Sans", sans-serif; font-size: 20.600px; line-height: 28px; color: #217346; margin-top: 0; white-space: nowrap; overflow: hidden; }
.addsheet { margin: 7px 0 0 39px; }
.hdots { margin-left: 618px; color: #b0b0b0; font-size: 14px; width: 22px; line-height: 34px; text-align: center; }
.hscroll { display: flex; margin: 4px 0 0 0; height: 25px; }
.hbtn { width: 22px; box-sizing: border-box; height: 25px; display: flex; align-items: center; justify-content: center; background: #fff; border: 1px solid #ccc; flex: none; }
.hthumb { width: 637px; margin-left: 1px; box-sizing: border-box; border: 1px solid #ababab; background: #fff; height: 25px; }
.htrack { width: 38px; background: #eaeaea; height: 25px; }

.status { height: 33px; flex: none; background: #217346; color: #fff; display: flex; align-items: center; font-size: 15px; }
.ready { margin-left: 8px; margin-bottom: 2px; }
.views { margin-left: auto; display: flex; height: 33px; }
.v { width: 45px; display: flex; align-items: center; justify-content: center; }
.v.on { background: #0a5c32; }
.zoombar { display: flex; align-items: center; margin-left: 3px; width: 204px; box-sizing: border-box; padding-left: 3px; }
.zminus { width: 11px; height: 3px; background: #fff; }
.zline { position: relative; width: 150px; height: 1px; background: #fff; margin: 0 5px; }
.zthumb { position: absolute; left: 73px; top: -9px; width: 5px; height: 18px; background: #fff; }
.pct { width: 48px; font-size: 16px; color: #e4f3ea; margin-bottom: 2px; }
</style>
